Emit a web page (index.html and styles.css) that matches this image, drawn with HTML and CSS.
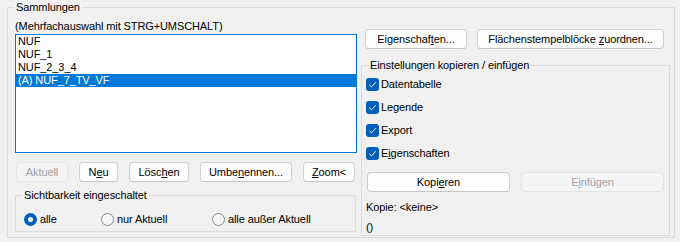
FILE: index.html
```html
<!DOCTYPE html>
<html lang="de">
<head>
<meta charset="utf-8">
<title>Sammlungen</title>
<link rel="stylesheet" href="styles.css">
</head>
<body>
<fieldset class="group outer">
  <legend class="group-title">Sammlungen</legend>
  <div class="outer-body">
    <div class="left">
      <div class="hint">(Mehrfachauswahl mit STRG+UMSCHALT)</div>
      <div class="listbox">
        <div class="item">NUF</div>
        <div class="item">NUF_1</div>
        <div class="item">NUF_2_3_4</div>
        <div class="item selected">(A) NUF_7_TV_VF</div>
      </div>
      <div class="btnrow list-btns">
        <button class="btn disabled w-aktuell">Aktuell</button>
        <button class="btn w-neu">N<u>e</u>u</button>
        <button class="btn w-loeschen">Lösc<u>h</u>en</button>
        <button class="btn w-umbenennen">Umbe<u>n</u>ennen...</button>
        <button class="btn w-zoom"><u>Z</u>oom&lt;</button>
      </div>
      <fieldset class="group vis">
        <legend class="group-title">Sichtbarkeit eingeschaltet</legend>
        <div class="radios">
          <label class="radio"><span class="radio-dot on"></span>alle</label>
          <label class="radio"><span class="radio-dot"></span>nur Aktuell</label>
          <label class="radio"><span class="radio-dot"></span>alle außer Aktuell</label>
        </div>
      </fieldset>
    </div>
    <div class="right">
      <div class="btnrow top-btns">
        <button class="btn w-eig">Eigenschaf<u>t</u>en...</button>
        <button class="btn w-flaechen">Flächenstempelblöcke <u>z</u>uordnen...</button>
      </div>
      <fieldset class="group copy">
        <legend class="group-title">Einstellungen kopieren / einfügen</legend>
        <div class="checks">
          <label class="check"><svg class="cb" viewBox="0 0 13 13"><rect x="0" y="0" width="13" height="13" rx="3" fill="#005fb8"/><path d="M3.4 6.8 L5.5 8.9 L9.7 4.3" fill="none" stroke="#fff" stroke-width="1"/></svg>Datentabelle</label>
          <label class="check"><svg class="cb" viewBox="0 0 13 13"><rect x="0" y="0" width="13" height="13" rx="3" fill="#005fb8"/><path d="M3.4 6.8 L5.5 8.9 L9.7 4.3" fill="none" stroke="#fff" stroke-width="1"/></svg>Legende</label>
          <label class="check"><svg class="cb" viewBox="0 0 13 13"><rect x="0" y="0" width="13" height="13" rx="3" fill="#005fb8"/><path d="M3.4 6.8 L5.5 8.9 L9.7 4.3" fill="none" stroke="#fff" stroke-width="1"/></svg>Export</label>
          <label class="check"><svg class="cb" viewBox="0 0 13 13"><rect x="0" y="0" width="13" height="13" rx="3" fill="#005fb8"/><path d="M3.4 6.8 L5.5 8.9 L9.7 4.3" fill="none" stroke="#fff" stroke-width="1"/></svg>E<u>i</u>genschaften</label>
        </div>
        <div class="btnrow copy-btns">
          <button class="btn w-half">Kopi<u>e</u>ren</button>
          <button class="btn disabled w-half">E<u>i</u>nfügen</button>
        </div>
        <div class="info">Kopie: &lt;keine&gt;</div>
        <div class="info paren">()</div>
      </fieldset>
    </div>
  </div>
</fieldset>
</body>
</html>
```

FILE: styles.css
```css
* { box-sizing: border-box; }

html, body {
  margin: 0;
  padding: 0;
  background: #f0f0f0;
}

body {
  width: 680px;
  height: 242px;
  padding-left: 7px;
  font-family: "Liberation Sans", Arial, sans-serif;
  font-size: 11px;
  letter-spacing: -0.1px;
  color: #000;
  overflow: hidden;
}

.group {
  margin: 0;
  padding: 0;
  min-width: 0;
  border: 1px solid #dcdcdc;
}

.group-title {
  margin-left: 6px;
  padding: 0 2px;
  line-height: 15px;
  height: 15px;
}

.outer {
  width: 668px;
}

.outer-body {
  display: flex;
  gap: 4px;
  padding-left: 7px;
  padding-right: 4px;
  height: 222px;
}

.left {
  width: 342px;
  padding-top: 4px;
  display: flex;
  flex-direction: column;
}

.hint {
  line-height: 15px;
  height: 15px;
  white-space: nowrap;
}

.listbox {
  height: 119px;
  border: 1px solid #0078d7;
  background: #fff;
}

.item {
  height: 13px;
  line-height: 13px;
  padding-left: 2px;
  white-space: nowrap;
}

.item.selected {
  background: #0078d7;
  color: #fff;
}

.btnrow {
  display: flex;
}

.btn {
  height: 20px;
  padding: 0;
  margin: 0;
  font: inherit;
  letter-spacing: inherit;
  color: #000;
  background: #fdfdfd;
  border: 1px solid #d0d0d0;
  border-bottom-color: #c4c4c4;
  border-radius: 4px;
  line-height: 17px;
  text-align: center;
  white-space: nowrap;
}

.btn.disabled {
  background: #f5f5f5;
  border-color: #e5e5e5;
  color: #a0a0a0;
}

.btn u { text-underline-offset: 1px; }

.list-btns {
  margin-top: 9px;
  margin-left: 1px;
  gap: 11px;
}

.w-aktuell { width: 52px; }
.w-neu { width: 39px; }
.w-loeschen { width: 60px; }
.w-umbenennen { width: 92px; }
.w-zoom { width: 52px; }

.vis {
  margin-top: 6px;
  width: 341px;
  height: 44px;
}

.radios {
  display: grid;
  grid-template-columns: 77px 111px auto;
  padding-left: 8px;
  padding-top: 9px;
}

.radio {
  display: flex;
  align-items: center;
  height: 15px;
  line-height: 15px;
  white-space: nowrap;
}

.radio-dot {
  width: 13px;
  height: 13px;
  border-radius: 50%;
  border: 1px solid #8a8a8a;
  background: #f6f6f6;
  margin-right: 3px;
  flex: none;
}

.radio-dot.on {
  border: 4px solid #005fb8;
  background: #fff;
}

.right {
  width: 309px;
  padding-top: 14px;
  display: flex;
  flex-direction: column;
}

.top-btns {
  margin-left: 4px;
  gap: 10px;
}

.w-eig { width: 102px; }
.w-flaechen { width: 187px; }

.copy {
  margin-top: 9px;
  width: 309px;
  height: 178px;
}

.checks {
  padding-left: 4px;
}

.check {
  display: flex;
  align-items: center;
  height: 23px;
  line-height: 15px;
  white-space: nowrap;
}

.cb {
  width: 13px;
  height: 13px;
  margin-right: 2px;
  flex: none;
}

.copy-btns {
  margin-top: 7px;
  margin-left: 5px;
  gap: 11px;
}

.w-half { width: 143px; }

.info {
  padding-left: 4px;
  line-height: 15px;
  height: 15px;
  margin-top: 8px;
  white-space: nowrap;
}

.info.paren {
  margin-top: 5px;
}
```
